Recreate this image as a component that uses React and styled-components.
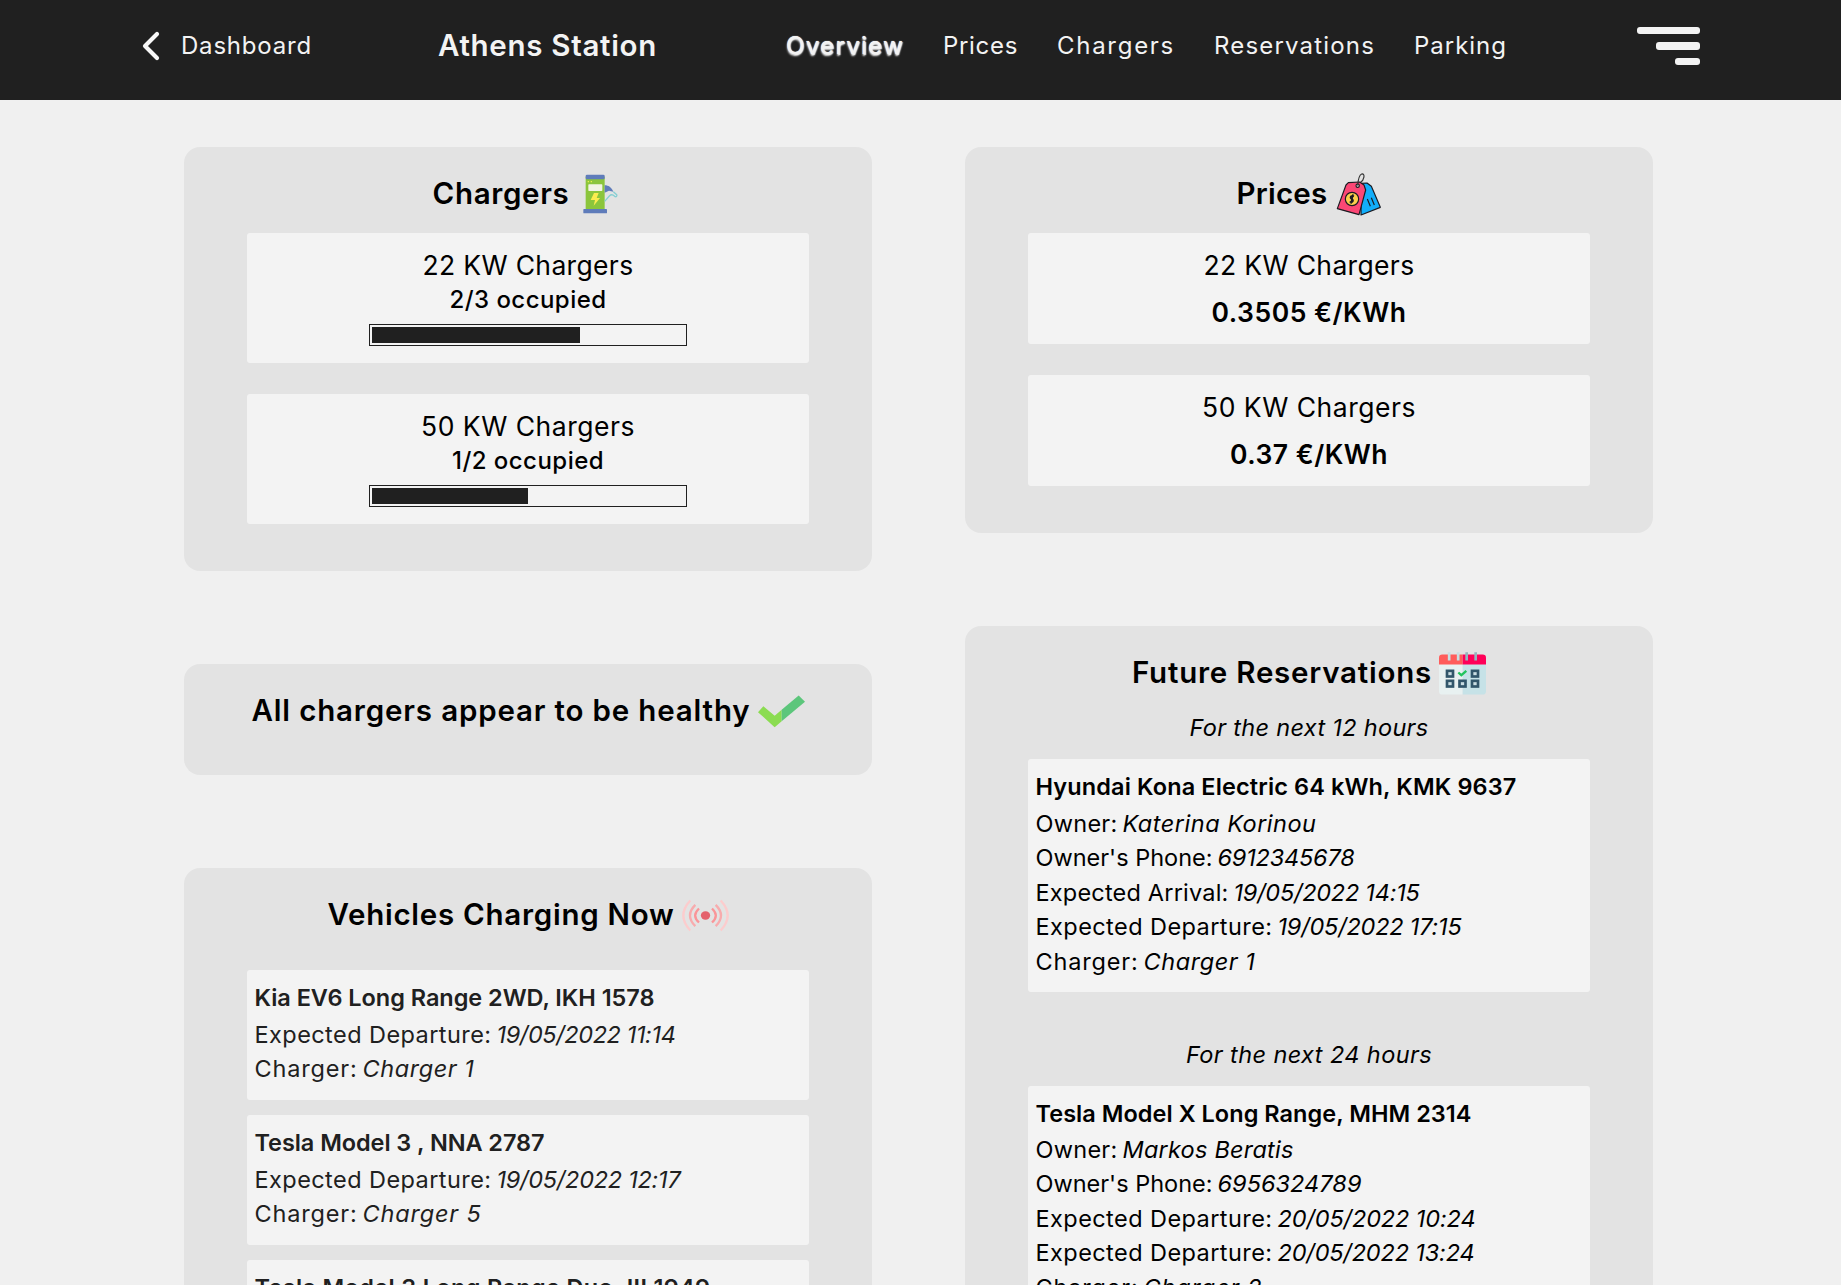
import React, { useLayoutEffect, useRef, useState } from "react";
import styled, { createGlobalStyle, css } from "styled-components";

const Global = createGlobalStyle`
  * { box-sizing: border-box; }
  html, body { margin: 0; height: 1285px; overflow: hidden; background: #f0f0f0; }
  body { font-family: Inter, "Open Sans", sans-serif; color: #000; }
`;

const heading = css`
  font-size: 29.5px;
  font-weight: 600;
`;

/* Text tracked so that it fills a given width */
const FitBox = styled.span`
  display: inline-block;
  flex: none;
  white-space: nowrap;
  text-align: left;
  font-style: ${(p) => (p.$italic ? "italic" : "inherit")};
`;

function Fit({ w, italic, children }) {
  const ref = useRef(null);
  const [tracking, setTracking] = useState(0);
  useLayoutEffect(() => {
    const range = document.createRange();
    range.selectNodeContents(ref.current);
    const natural = range.getBoundingClientRect().width;
    setTracking((w - natural) / children.length);
  }, [w, children]);
  return (
    <FitBox ref={ref} $italic={italic} style={{ width: w, letterSpacing: tracking }}>
      {children}
    </FitBox>
  );
}

const Header = styled.header`
  height: 100px;
  padding: 0 141px 8px 142px;
  background: #202020;
  color: #f3f3f3;
  display: flex;
  align-items: center;
  font-size: 24px;
  line-height: 36px;
`;
const Back = styled.a`
  display: flex;
  align-items: center;
  gap: 21px;
  width: 296px;
`;
const Station = styled.h1`
  ${heading}
  margin: 0;
  padding-bottom: 2px;
  width: 348px;
`;
const Nav = styled.nav`
  display: flex;
  gap: 39px;
  padding-bottom: 1px;
`;
const NavItem = styled.a`
  text-shadow: ${(p) =>
    p.$active ? "0 0 1px #f3f3f3, 1px 1px 1px #f3f3f3, 0 2px 2px #f3f3f3" : "none"};
`;
const Menu = styled.div`
  margin-left: auto;
  display: flex;
  flex-direction: column;
  align-items: flex-end;
  gap: 8px;
`;
const MenuBar = styled.span`
  width: ${(p) => p.$w}px;
  height: 7.5px;
  border-radius: 3px;
  background: #f3f3f3;
`;

const Columns = styled.main`
  display: flex;
  gap: 93px;
  padding: 47px 0 0 184px;
  align-items: flex-start;
`;
const Column = styled.div`
  width: 688px;
  display: flex;
  flex-direction: column;
  gap: 93.2px;
`;
const Card = styled.section`
  background: #e3e3e3;
  border-radius: 16px;
  padding: 24px 63px ${(p) => p.$bottom ?? 47}px;
`;
const CardTitle = styled.h2`
  ${heading}
  margin: 0 -20px ${(p) => p.$gap ?? 18}px;
  height: 44px;
  line-height: 44px;
  display: flex;
  justify-content: center;
  align-items: center;
  gap: 7px;
`;
const Icon = styled.svg`
  width: 47px;
  height: 47px;
  flex: none;
  margin-top: 2px;
`;
const Stack = styled.div`
  display: flex;
  flex-direction: column;
  gap: ${(p) => p.$gap}px;
`;
const Panel = styled.div`
  background: #f3f3f3;
  border-radius: 3px;
  height: ${(p) => p.$h}px;
  padding-top: 13px;
  display: flex;
  flex-direction: column;
  align-items: center;
`;
const Power = styled.div`
  font-size: 26.5px;
  line-height: 38px;
`;
const Occupied = styled.div`
  font-size: 24px;
  font-weight: 500;
  line-height: 32px;
`;
const Price = styled.div`
  font-size: 26.5px;
  font-weight: 600;
  line-height: 38px;
  margin-top: 9px;
`;
const Meter = styled.div`
  width: 318px;
  height: 22px;
  margin-top: 8px;
  border: 1px solid #202020;
  padding: 2px;
`;
const MeterFill = styled.div`
  height: 16px;
  background: #202020;
`;
const Details = styled.div`
  background: #f3f3f3;
  border-radius: 3px;
  padding: 10px 7.5px 13px;
  font-size: 23.5px;
  color: ${(p) => p.$color};
`;
const Vehicle = styled.div`
  font-weight: 600;
  line-height: 36px;
  margin-bottom: 1.4px;
`;
const Line = styled.div`
  display: flex;
  gap: 5px;
  line-height: 34.5px;
`;
const Period = styled.div`
  font-size: 23.5px;
  line-height: 36px;
  text-align: center;
  margin: ${(p) => p.$top ?? 0}px 0 13px;
`;

const ChargerIcon = () => (
  <Icon viewBox="51 33 141 141">
    <rect x="77" y="50" width="57" height="100" fill="#8bc53c" />
    <rect x="77" y="44" width="57" height="14" rx="4" fill="#5f7cba" />
    <rect x="70" y="147" width="71" height="13" rx="2" fill="#5f7cba" />
    <rect x="85" y="73" width="42" height="20" rx="2" fill="#f1f3e4" />
    <path d="M83 65h4M92 65h4" stroke="#e8ee4e" strokeWidth="4" />
    <path d="M102 99h14l-6 15h10l-19 23 4-17H92z" fill="#fcec4f" />
    <path d="M134 76c12 0 20 6 26 19l-13-3-13 6z" fill="#5f7cba" />
    <path d="M134 124l14-16c5-5 12-3 16 1 5 3 8-1 6-5l-10-9" fill="none" stroke="#86cfd3" strokeWidth="4" />
  </Icon>
);
const PriceIcon = () => (
  <Icon viewBox="45 33 141 141" stroke="#1b1b22" strokeWidth="3.500" strokeLinejoin="round">
    <path d="M124 70l17-1 13 10 27 63-58 23z" fill="#12aefa" />
    <path d="M85 68l34-2 13 9 5 15-20 74-65-18 26-71z" fill="#fb4775" />
    <path d="M142 117l9 22M154 113l9 22" />
    <circle cx="96" cy="117" r="20" fill="#fcd04c" />
    <path d="M102 109c-10-4-14 4-7 8s4 12-6 8M99 103l-6 28" fill="none" strokeWidth="5" />
    <circle cx="113" cy="77" r="5" fill="#e3e3e3" />
    <path d="M113 77c1-13 4-32 12-35 12-2 7 19-3 24" fill="none" stroke="#333" />
  </Icon>
);
const CheckIcon = () => (
  <Icon viewBox="261 22.5 141 141">
    <path d="M261 95l16-18 34 29 21-18v34l-21 18z" fill="#8bdc51" />
    <path d="M332 88l51-43 19 19-70 58z" fill="#5cc67b" />
  </Icon>
);
const LiveIcon = () => (
  <Icon viewBox="33 637.5 141 141" fill="none" strokeWidth="7">
    <ellipse cx="103.500" cy="708" rx="14" ry="12.500" fill="#e4616c" />
    <path d="M84 687q-23 21 0 42M123 687q23 21 0 42" stroke="#fa9598" />
    <path d="M73 676q-32 32 0 64M134 676q32 32 0 64" stroke="#f8abad" />
    <path d="M58 663q-42 45 0 90M149 663q42 45 0 90" stroke="#fccccd" />
  </Icon>
);
const cells = [[77, 90], [152, 90], [77, 120], [114.5, 120], [152, 120]];
const CalendarIcon = () => (
  <Icon viewBox="57 31.500 141 141">
    <path d="M57 70h71v95H67q-10 0-10-10z" fill="#e8f1f1" />
    <path d="M128 70h70v85q0 10-10 10h-60z" fill="#c6e2e7" />
    <path d="M57 75V55q0-10 10-10h61v30z" fill="#ff5c5b" />
    <path d="M128 75V45h60q10 0 10 10v20z" fill="#ff0058" />
    <path d="M87.500 38v25M114.500 38v25" stroke="#c8dfe3" strokeWidth="8" />
    <path d="M140 38v25M167 38v25" stroke="#93b6bf" strokeWidth="8" />
    {cells.map(([x, y]) => (
      <rect key={`${x}-${y}`} x={x + 4} y={y + 4} width="18" height="17" fill="#c9dde2" stroke="#31566a" strokeWidth="8" />
    ))}
    <path d="M115 99l9 8 15-13" fill="none" stroke="#21c45c" strokeWidth="7" />
  </Icon>
);

const nav = [["Overview", 118], ["Prices", 75], ["Chargers", 118], ["Reservations", 161], ["Parking", 93]];
const chargers = [
  { power: "22 KW Chargers", pw: 211, text: "2/3 occupied", tw: 157, share: 200 / 3 },
  { power: "50 KW Chargers", pw: 214, text: "1/2 occupied", tw: 152, share: 50 },
];
const prices = [
  { power: "22 KW Chargers", pw: 211, text: "0.3505 €/KWh", tw: 195 },
  { power: "50 KW Chargers", pw: 214, text: "0.37 €/KWh", tw: 158 },
];
const charging = [
  { name: "Kia EV6 Long Range 2WD, IKH 1578", w: 400, lines: [["Expected Departure:", 237, "19/05/2022 11:14", 179], ["Charger:", 103, "Charger 1", 112]] },
  { name: "Tesla Model 3 , NNA 2787", w: 290, lines: [["Expected Departure:", 237, "19/05/2022 12:17", 184], ["Charger:", 103, "Charger 5", 119]] },
  { name: "Tesla Model 3 Long Range Duo, III 1949", w: 456, lines: [["Expected Departure:", 237, "19/05/2022 12:40", 184], ["Charger:", 103, "Charger 4", 119]] },
];
const reservations = [
  {
    period: "For the next 12 hours", pw: 239,
    name: "Hyundai Kona Electric 64 kWh, KMK 9637", w: 481,
    lines: [
      ["Owner:", 82, "Katerina Korinou", 194],
      ["Owner's Phone:", 177, "6912345678", 137],
      ["Expected Arrival:", 193, "19/05/2022 14:15", 186],
      ["Expected Departure:", 237, "19/05/2022 17:15", 184],
      ["Charger:", 103, "Charger 1", 112],
    ],
  },
  {
    period: "For the next 24 hours", pw: 246,
    name: "Tesla Model X Long Range, MHM 2314", w: 436,
    lines: [
      ["Owner:", 82, "Markos Beratis", 171],
      ["Owner's Phone:", 177, "6956324789", 144],
      ["Expected Departure:", 237, "20/05/2022 10:24", 198],
      ["Expected Departure:", 237, "20/05/2022 13:24", 197],
      ["Charger:", 103, "Charger 2", 119],
    ],
  },
];

function DetailCard({ item, color }) {
  return (
    <Details $color={color}>
      <Vehicle><Fit w={item.w}>{item.name}</Fit></Vehicle>
      {item.lines.map(([label, lw, value, vw], i) => (
        <Line key={i}>
          <Fit w={lw}>{label}</Fit>
          <Fit w={vw} italic>{value}</Fit>
        </Line>
      ))}
    </Details>
  );
}

export default function App() {
  return (
    <>
      <Global />
      <Header>
        <Back>
          <svg width="18" height="30" viewBox="0 0 18 30" fill="none" stroke="#f8f8f8" strokeWidth="4.200" strokeLinecap="round" strokeLinejoin="round">
            <path d="M15 3L3 15l12 12" />
          </svg>
          <Fit w={131}>Dashboard</Fit>
        </Back>
        <Station><Fit w={219}>Athens Station</Fit></Station>
        <Nav>
          {nav.map(([label, w], i) => (
            <NavItem key={label} $active={i === 0}><Fit w={w}>{label}</Fit></NavItem>
          ))}
        </Nav>
        <Menu>
          <MenuBar $w={63} />
          <MenuBar $w={44} />
          <MenuBar $w={25} />
        </Menu>
      </Header>
      <Columns>
        <Column>
          <Card>
            <CardTitle><Fit w={137}>Chargers</Fit><ChargerIcon /></CardTitle>
            <Stack $gap={31}>
              {chargers.map((c) => (
                <Panel key={c.power} $h={130}>
                  <Power><Fit w={c.pw}>{c.power}</Fit></Power>
                  <Occupied><Fit w={c.tw}>{c.text}</Fit></Occupied>
                  <Meter><MeterFill style={{ width: `${c.share}%` }} /></Meter>
                </Panel>
              ))}
            </Stack>
          </Card>
          <Card $bottom={43}>
            <CardTitle $gap={0}><Fit w={499}>All chargers appear to be healthy</Fit><CheckIcon /></CardTitle>
          </Card>
          <Card>
            <CardTitle $gap={34}><Fit w={347}>Vehicles Charging Now</Fit><LiveIcon /></CardTitle>
            <Stack $gap={15.6}>
              {charging.map((c) => <DetailCard key={c.name} item={c} color="#202020" />)}
            </Stack>
          </Card>
        </Column>
        <Column>
          <Card>
            <CardTitle><Fit w={91}>Prices</Fit><PriceIcon /></CardTitle>
            <Stack $gap={31}>
              {prices.map((c) => (
                <Panel key={c.power} $h={111}>
                  <Power><Fit w={c.pw}>{c.power}</Fit></Power>
                  <Price><Fit w={c.tw}>{c.text}</Fit></Price>
                </Panel>
              ))}
            </Stack>
          </Card>
          <Card>
            <CardTitle $gap={16}><Fit w={300}>Future Reservations</Fit><CalendarIcon /></CardTitle>
            {reservations.map((r, i) => (
              <React.Fragment key={r.period}>
                <Period $top={i ? 44.5 : 0}><Fit w={r.pw} italic>{r.period}</Fit></Period>
                <DetailCard item={r} color="#000" />
              </React.Fragment>
            ))}
          </Card>
        </Column>
      </Columns>
    </>
  );
}
